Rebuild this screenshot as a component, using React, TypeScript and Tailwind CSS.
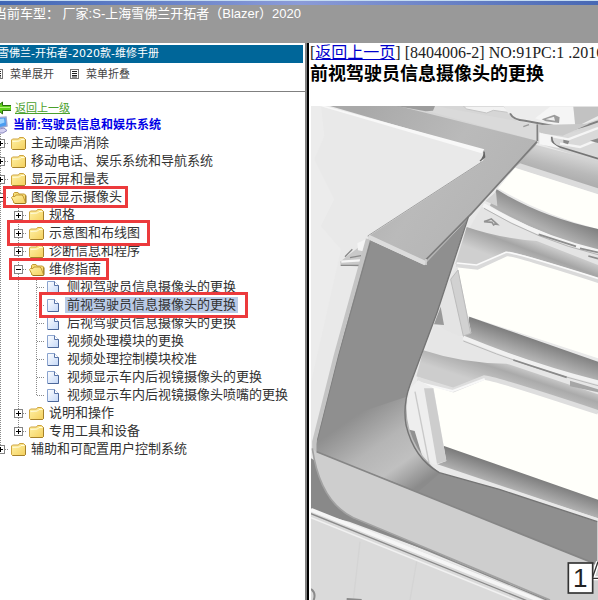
import React, { useState } from 'react';

interface TreeNode {
  label: string;
  open?: boolean;
  selected?: boolean;
  mark?: string;
  children?: TreeNode[];
}

const tree: TreeNode[] = [
  { label: '主动噪声消除', children: [] },
  { label: '移动电话、娱乐系统和导航系统', children: [] },
  { label: '显示屏和量表', children: [] },
  {
    label: '图像显示摄像头',
    open: true,
    mark: 'left-3 -right-1 -inset-y-0.5',
    children: [
      { label: '规格', children: [] },
      { label: '示意图和布线图', mark: '-left-0.5 -right-2 -inset-y-1', children: [] },
      { label: '诊断信息和程序', children: [] },
      {
        label: '维修指南',
        open: true,
        mark: 'left-0 -right-1.5 -inset-y-0.5',
        children: [
          { label: '侧视驾驶员信息摄像头的更换' },
          { label: '前视驾驶员信息摄像头的更换', selected: true, mark: 'left-3 -right-2.5 -inset-y-1' },
          { label: '后视驾驶员信息摄像头的更换' },
          { label: '视频处理模块的更换' },
          { label: '视频处理控制模块校准' },
          { label: '视频显示车内后视镜摄像头的更换' },
          { label: '视频显示车内后视镜摄像头喷嘴的更换' },
        ],
      },
      { label: '说明和操作', children: [] },
      { label: '专用工具和设备', children: [] },
    ],
  },
  { label: '辅助和可配置用户控制系统', children: [] },
];

const Guide: React.FC = () => (
  <svg viewBox="0 0 18 18" className="h-[18px] w-[18px] shrink-0">
    <path d="M9.5 0v18" stroke="#8a8a8a" strokeDasharray="1 1" />
  </svg>
);

const Join: React.FC<{ last: boolean; box?: 'plus' | 'minus' }> = ({ last, box }) => (
  <svg viewBox="0 0 18 18" className="h-[18px] w-[18px] shrink-0">
    <path d={last ? 'M9.5 0v10M10 9.5h8' : 'M9.5 0v18M10 9.5h8'} stroke="#8a8a8a" strokeDasharray="1 1" />
    {box && <rect x="5.5" y="5.5" width="8" height="8" fill="#fff" stroke="#848484" />}
    {box && <path d={box === 'plus' ? 'M7 9.5h5M9.5 7v5' : 'M7 9.5h5'} stroke="#000" />}
  </svg>
);

const FolderIcon: React.FC<{ open: boolean }> = ({ open }) => (
  <svg viewBox="0 0 18 18" className="h-[18px] w-[18px] shrink-0">
    <defs>
      <linearGradient id="folder" x1="0" y1="0" x2="1" y2="1">
        <stop offset="0" stopColor="#fff3a8" />
        <stop offset="1" stopColor="#f4cf5c" />
      </linearGradient>
    </defs>
    {open ? (
      <g>
        <path d="M4.5 14.500v-9l1-1h3.500l1 1.500h5.500l1 1v7.500z" fill="#f6dc74" stroke="#c39a35" />
        <path d="M2.500 9.500l1-1h2.500l1-1.500h6l1 1 2.500 6.500-1 1h-10z" fill="url(#folder)" stroke="#c39a35" />
        <path d="M6 15.500h10.500l.5-1v-7" fill="none" stroke="#96741f" />
      </g>
    ) : (
      <g>
        <path d="M2.500 14.500v-8.500l1-1h6l1-1.500h4l2 2v9l-1 1h-12z" fill="url(#folder)" stroke="#cfa440" />
        <path d="M3.500 7.500l7-.5 1.500-1.500h3.500" fill="none" stroke="#fffbdc" />
        <path d="M3.500 15.500h12l1-1v-9" fill="none" stroke="#a5812a" />
      </g>
    )}
  </svg>
);

const PageIcon: React.FC = () => (
  <svg viewBox="0 0 18 18" className="h-[18px] w-[18px] shrink-0">
    <defs>
      <linearGradient id="sheet" x1="0" y1="0" x2="1" y2="1">
        <stop offset="0" stopColor="#fff" />
        <stop offset="1" stopColor="#c4d8f8" />
      </linearGradient>
    </defs>
    <path d="M2.500 3.500h7l4 4v8h-11z" fill="url(#sheet)" stroke="#8ba4cf" />
    <path d="M9.500 3.500v4h4" fill="#fff" stroke="#5974a8" />
    <path d="M3 15.500h10.500v-8" fill="none" stroke="#4c6799" />
  </svg>
);

const ListIcon: React.FC = () => (
  <svg viewBox="0 0 10 10" className="h-2.5 w-2.5 shrink-0">
    <rect x=".5" y=".5" width="8" height="9" fill="#fff" stroke="#777" />
    <path d="M2 2.500h5M2 4.500h5M2 6.500h5M2 8h5" stroke="#222" />
  </svg>
);

const ArrowIcon: React.FC = () => (
  <svg viewBox="0 0 18 14" className="h-3.5 w-[18px] shrink-0">
    <path d="M2.500 7l7-6v3.500h9v5h-9v3.500z" fill="#5fd01b" stroke="#286b0c" />
    <path d="M7 6.500h10" stroke="#b2f37a" />
  </svg>
);

const ComputerIcon: React.FC = () => (
  <svg viewBox="0 0 18 18" className="h-[18px] w-[18px] shrink-0">
    <path d="M2 2l13-1 1 9-12 3z" fill="#4a9cf0" stroke="#9aa6d2" strokeWidth="1.500" />
    <path d="M4 3.500l9-1 .5 4-9 3z" fill="#9ed4ff" />
    <path d="M4 14l9-2 3 2.500-4 2.500h-6z" fill="#d4d1f0" stroke="#8d8ac2" />
  </svg>
);

const TreeItem: React.FC<{ node: TreeNode; level: number; last: boolean }> = ({ node, level, last }) => {
  const [open, setOpen] = useState(Boolean(node.open));
  const isFolder = Boolean(node.children);

  return (
    <li>
      <div className="flex h-[18px] whitespace-nowrap">
        {Array.from({ length: level }, (_, i) => (
          <Guide key={i} />
        ))}
        <div className="relative flex items-center">
          {isFolder ? (
            <button
              type="button"
              aria-label={node.label}
              aria-expanded={open}
              onClick={() => setOpen(!open)}
              className="shrink-0"
            >
              <Join last={last} box={open ? 'minus' : 'plus'} />
            </button>
          ) : (
            <Join last={last} />
          )}
          {isFolder ? <FolderIcon open={open} /> : <PageIcon />}
          <a
            href="#"
            className={`ml-0.5 px-0.5 text-[13px] leading-4 text-[#333] ${node.selected ? 'bg-[#b9cae6]' : ''}`}
          >
            {node.label}
          </a>
          {node.mark && (
            <span className={`pointer-events-none absolute z-10 border-3 border-[#ec3a3c] ${node.mark}`} />
          )}
        </div>
      </div>
      {isFolder && open && <TreeList nodes={node.children!} level={level + 1} />}
    </li>
  );
};

const TreeList: React.FC<{ nodes: TreeNode[]; level: number }> = ({ nodes, level }) => (
  <ul>
    {nodes.map((node, index) => (
      <TreeItem key={node.label} node={node} level={level} last={index === nodes.length - 1} />
    ))}
  </ul>
);

// Console trim with the camera position called out as 1
const TrimDrawing: React.FC = () => (
  <svg
    viewBox="33 33 861 1482"
    preserveAspectRatio="xMinYMin slice"
    className="block h-[494px] w-full"
    role="img"
    aria-label="前视驾驶员信息摄像头"
  >
    <defs>
      <linearGradient id="topArm" gradientUnits="userSpaceOnUse" x1="200" y1="33" x2="600" y2="300">
        <stop offset="0" stopColor="#a9a9a9" />
        <stop offset=".6" stopColor="#bababa" />
        <stop offset="1" stopColor="#b5b5b5" />
      </linearGradient>
      <linearGradient id="shade1" gradientUnits="userSpaceOnUse" x1="760" y1="335" x2="730" y2="400">
        <stop offset="0" stopColor="#7b7b7b" />
        <stop offset="1" stopColor="#b0b0b0" />
      </linearGradient>
      <linearGradient id="shade2" gradientUnits="userSpaceOnUse" x1="720" y1="735" x2="700" y2="795">
        <stop offset="0" stopColor="#7c7c7c" />
        <stop offset="1" stopColor="#b4b4b4" />
      </linearGradient>
      <linearGradient id="shade3" gradientUnits="userSpaceOnUse" x1="690" y1="1140" x2="670" y2="1200">
        <stop offset="0" stopColor="#7b7b7b" />
        <stop offset="1" stopColor="#b6b6b6" />
      </linearGradient>
      <linearGradient id="band1" gradientUnits="userSpaceOnUse" x1="800" y1="180" x2="780" y2="260">
        <stop offset="0" stopColor="#d2d2d2" />
        <stop offset=".5" stopColor="#b9b9b9" />
        <stop offset="1" stopColor="#a9a9a9" />
      </linearGradient>
      <linearGradient id="band2" gradientUnits="userSpaceOnUse" x1="650" y1="420" x2="620" y2="500">
        <stop offset="0" stopColor="#c9c9c9" />
        <stop offset=".35" stopColor="#a5a5a5" />
        <stop offset="1" stopColor="#cfcfcf" />
      </linearGradient>
      <linearGradient id="band3" gradientUnits="userSpaceOnUse" x1="560" y1="770" x2="530" y2="860">
        <stop offset="0" stopColor="#dadada" />
        <stop offset=".4" stopColor="#aaaaaa" />
        <stop offset="1" stopColor="#cdcdcd" />
      </linearGradient>
      <linearGradient id="pillar" gradientUnits="userSpaceOnUse" x1="170" y1="960" x2="330" y2="1190">
        <stop offset="0" stopColor="#8f8f8f" />
        <stop offset=".4" stopColor="#b5b5b5" />
        <stop offset=".7" stopColor="#c0c0c0" />
        <stop offset="1" stopColor="#8b8b8b" />
      </linearGradient>
    </defs>

    <rect x="33" y="33" width="861" height="1482" fill="#e9e9e9" />
    <path d="M33 33h30l10 90-30 70 60 120-40 80 60 70-90 400z" fill="#ececec" />

    {/* brackets along the top right */}
    <path d="M290 33h604v170l-185-60z" fill="#d6d6d6" />
    <path d="M405 33l305 56v48l-330-90z" fill="#dadada" />
    <path d="M490 33h120l20 20-50-7-20 8-60-12z" fill="#f2f2f2" stroke="#c4c4c4" strokeWidth="3" />
    <path d="M610 33h284v40l-90 30-150-24-28-22z" fill="#ececec" />
    <path d="M630 55q10 20 45 22l130 24q20 4 89-22" fill="none" stroke="#808080" strokeWidth="6" />
    <path d="M705 70l45-35h70l8 62-50-4z" fill="#f5f5f5" />
    <path d="M820 35h74v28l-68 34z" fill="#c2c2c2" />
    <path d="M725 73l38-14 16 8-2 17-40-5z" fill="#9c9c9c" />
    <path d="M737 73l25-8 3 12z" fill="#efefef" />
    <path d="M755 125q0 25 25 31l114 35V95l-80 18-60 3z" fill="#d9d9d9" />
    <path d="M718 90l150-4-80 36-70-6z" fill="#c9c9c9" />
    <path d="M725 118l80 15 89-34M780 146l60 10 54-22" fill="none" stroke="#f5f5f5" strokeWidth="7" />
    <path d="M755 125q0 25 25 31l114 35" fill="none" stroke="#747474" strokeWidth="5" />
    <path d="M790 134l18 4-4 10-14-5zM870 137l24-7v14z" fill="#8a8a8a" />
    <path d="M718 112l34 14v14l28 20-62-12z" fill="#f6f6f6" />
    <path d="M670 95l17-6" stroke="#999" strokeWidth="4" />
    <path d="M712 88v50" stroke="#808080" strokeWidth="5" />

    {/* upper slot */}
    <path d="M700 148l194 50v97l-250-78z" fill="url(#band1)" />
    <path d="M660 205l234 75v18l-252-80z" fill="#dcdcdc" />
    <path d="M645 218l249 80v104q-160-40-300-122z" fill="#fffffa" />
    <path d="M590 283q130 82 304 119v70q-190-60-324-140z" fill="url(#shade1)" />
    <path d="M588 290l4 44-36-16z" fill="#d2d2d2" />
    <path d="M548 330q160 90 346 135v85q-200-80-389-145z" fill="#e4e4e4" />
    <path d="M550 330q160 95 344 139" fill="none" stroke="#f4f4f4" strokeWidth="12" />
    <path d="M552 340q160 95 342 139" fill="none" stroke="#b4b4b4" strokeWidth="3" />
    <path d="M552 380l22-8 18 16-10-1M552 380l24 2 6 10" fill="none" stroke="#939393" strokeWidth="5" />
    <path d="M716 418l112 36M840 460l54 12M865 483l29 8" stroke="#8d8d8d" strokeWidth="5" />

    {/* middle slot */}
    <path d="M500 396q100 34 210 42l184 72v55l-274-90-90 38-64-6z" fill="url(#band2)" />
    <path d="M470 512l60 5 88-40q14-4 276 78v235l-430-140z" fill="#fffffa" />
    <path d="M468 510l64 7 88-40q14-4 276 80" fill="none" stroke="#dadada" strokeWidth="14" />
    <path d="M470 504l60 6 88-38q14-4 276 78" fill="none" stroke="#fafafa" strokeWidth="5" />
    <path d="M508 665l386 135v60q-220-60-404-134z" fill="url(#shade2)" />
    <path d="M440 570l32-58 42 202-52 14-60-50z" fill="#e4e4e4" />
    <path d="M474 525l38 190-22 8-38-170z" fill="#d1d1d1" stroke="#bcbcbc" strokeWidth="3" />
    <path d="M422 635l10 55-30-2z" fill="#999" />

    {/* lower slot */}
    <path d="M402 690l88 38 404 140v90l-524-160z" fill="#e6e6e6" />
    <path d="M490 728q200 82 404 134" fill="none" stroke="#f1f1f1" strokeWidth="12" />
    <path d="M490 738q200 82 404 134" fill="none" stroke="#bababa" strokeWidth="3" />
    <path d="M370 766q120 40 250 40l274 92v60l-340-114-100 40-105-40z" fill="url(#band3)" />
    <path d="M640 795l160 52" stroke="#8a8a8a" strokeWidth="5" />
    <path d="M810 857l84 26v9l-84-18z" fill="#a6a6a6" />
    <path d="M350 856l110 28 92-36q18-2 342 107v263l-480-160z" fill="#fffffa" />
    <path d="M352 852l108 33 92-37q14-4 342 104" fill="none" stroke="#dedede" strokeWidth="14" />
    <path d="M350 862l108 26 96-36" fill="none" stroke="#f8f8f8" strokeWidth="6" />
    <path d="M430 1052l464 162v56l-484-163z" fill="url(#shade3)" />
    <path d="M330 880l25-24 46 24 38 218-38 14-90-112z" fill="#eeeeee" />
    <path d="M372 880h28l39 218-28 8z" fill="#cdcdcd" />
    <path d="M345 890l42 214" stroke="#c9c9c9" strokeWidth="4" />
    <path d="M322 1003l22 5 24 80-40-50z" fill="#919191" />
    <path d="M395 1106l499 164v34l-460-150z" fill="#e9e9e9" />

    {/* clip behind the frame */}
    <path d="M120 500l58-45h22l-18 60-60-4z" fill="#c9c9c9" />
    <path d="M135 485l22-22M150 488l33-6M122 511h60" fill="none" stroke="#8a8a8a" strokeWidth="4" />
    <path d="M124 500l56-4" stroke="#f6f6f6" strokeWidth="7" />
    <path d="M172 445l26-13v38l-24-4z" fill="#f4f4f4" />

    {/* frame */}
    <path d="M90 33h205l415 104q4 8-6 18L515 355 376 510 203 425l345-225q9-20-2-34z" fill="url(#topArm)" />
    <path d="M290 33h115l-6 14-22 2z" fill="#9d9d9d" />
    <path d="M75 33l478 130-8 12L60 33z" fill="#f8f8f8" />
    <path d="M552 170q2 16-12 28l14-12z" fill="#666" stroke="#666" strokeWidth="4" />
    <path d="M548 199L203 423" stroke="#a2a2a2" strokeWidth="3" />
    <path d="M711 140L515 355 378 494" fill="none" stroke="#7c7c7c" strokeWidth="5" />
    <path
      d="M203 432l170 78L502 372 412 650 330 870q-22 60-12 120 24 100 100 143l180 50 294 97v140L45 1070l4-30z"
      fill="#8f8f8f"
    />
    <path d="M65 990l255-85q-12 140 100 230l-65 55L45 1070z" fill="url(#pillar)" />
    <path
      d="M505 366L412 650 330 870q-22 60-12 120 24 100 100 143l180 50 294 97"
      fill="none"
      stroke="#747474"
      strokeWidth="4"
    />
    <path d="M204 432L108 780 43 1040v35" fill="none" stroke="#c4c4c4" strokeWidth="13" />
    <path d="M211 443L116 780 52 1036" fill="none" stroke="#828282" strokeWidth="3" />
    <path d="M205 425l172 80" stroke="#dcdcdc" strokeWidth="13" />
    <path d="M378 492v18" stroke="#d0d0d0" strokeWidth="5" />

    {/* lower face */}
    <path d="M33 1090v160l115 30 540 200z" fill="#898989" />
    <path d="M37 1060l12 10 845 340v105H750L160 1268Q60 1220 37 1060z" fill="#cecece" />
    <path d="M37 1060q23 160 123 208l590 247" fill="none" stroke="#a2a2a2" strokeWidth="5" />
    <path d="M50 1070l844 340" stroke="#868686" strokeWidth="5" />
    <path d="M33 1242l710 273H33z" fill="#dadada" />
    <path d="M33 1244l702 279" stroke="#f6f6f6" strokeWidth="11" />
    <path d="M33 1256l650 262M160 1274l590 245" stroke="#8a8a8a" strokeWidth="4" />
    <path d="M33 1268l640 258" stroke="#f1f1f1" strokeWidth="5" />
    <path d="M180 1340l-20 175M350 1400l-20 115" stroke="#d4d4d4" strokeWidth="4" />
    <path d="M33 1482q16 12 8 33M140 1512l45 3" fill="none" stroke="#8a8a8a" strokeWidth="6" />

    {/* callout */}
    <path d="M878 1446l16-46M878 1450h16" stroke="#fff" strokeWidth="12" />
    <path d="M878 1446l16-46M878 1450h16" stroke="#333" strokeWidth="4" />
    <rect x="805" y="1404" width="73" height="90" fill="#fff" stroke="#333" strokeWidth="5" />
    <text x="841" y="1476" textAnchor="middle" fontSize="78" fill="#222">
      1
    </text>
  </svg>
);

export default function App() {
  return (
    <div className="flex min-h-screen flex-col overflow-hidden bg-white font-['Liberation_Sans','Noto_Sans_CJK_SC',sans-serif]">
      <header className="bg-[#999] pb-5">
        <div className="h-px bg-[#c4dcf2]" />
        <div className="h-1 bg-linear-to-r from-[#3f66b5] via-[#8b9bd8] to-[#4868b4]" />
        <p className="-ml-1.5 h-[18px] text-[13px] leading-[18px] whitespace-nowrap text-white">
          当前车型： 厂家:S-上海雪佛兰开拓者（Blazer）2020
        </p>
      </header>

      <div className="flex flex-1">
        <aside className="w-[305px] shrink-0 overflow-hidden pt-0.5 text-[11px]">
          <h2 className="mr-0.5 h-[18px] bg-[#069] font-['DejaVu_Sans','Noto_Sans_CJK_SC',sans-serif] leading-[18px] whitespace-nowrap text-white">
            <span className="-ml-0.5">雪佛兰-开拓者-2020款-维修手册</span>
          </h2>
          <nav className="-ml-1.5 flex h-[29px] items-center gap-4 border-b border-[#808080] pb-1.5 text-[#444]">
            <a href="#" className="flex items-center gap-1.5">
              <ListIcon />
              菜单展开
            </a>
            <a href="#" className="flex items-center gap-1.5">
              <ListIcon />
              菜单折叠
            </a>
          </nav>

          <div className="-ml-[9px] pt-2">
            <a href="#" className="flex h-4 items-center gap-1 pl-0.5 text-[#4aa02c]">
              <ArrowIcon />
              <span className="underline">返回上一级</span>
            </a>
            <p className="flex h-[18px] items-center gap-1 text-xs font-bold text-[#0000e6]">
              <ComputerIcon />
              当前:驾驶员信息和娱乐系统
            </p>
            <TreeList nodes={tree} level={0} />
          </div>
        </aside>

        <div className="w-1 shrink-0 border-r-2 border-l-2 border-r-black border-l-[#808080]" />

        <main className="min-w-0 flex-1 overflow-hidden pl-px">
          <p className="h-[19px] font-['Liberation_Serif','Noto_Sans_CJK_SC',serif] text-base leading-[19px] whitespace-nowrap text-[#222]">
            [
            <a href="#" className="text-[#0000cc] underline">
              返回上一页
            </a>
            ] [8404006-2] NO:91PC:1 .2016
          </p>
          <h1 className="h-6 text-lg leading-6 font-bold whitespace-nowrap text-black">前视驾驶员信息摄像头的更换</h1>
          <div className="mt-5 pl-px">
            <TrimDrawing />
          </div>
        </main>
      </div>
    </div>
  );
}
